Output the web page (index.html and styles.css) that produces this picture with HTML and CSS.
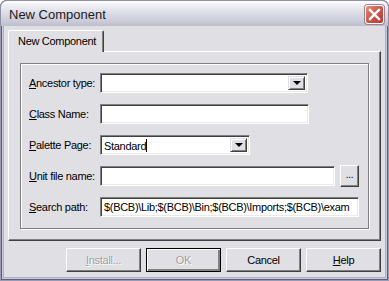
FILE: index.html
```html
<!DOCTYPE html>
<html lang="en">
<head>
    <meta charset="UTF-8">
    <title>New Component</title>
    <link rel="stylesheet" href="styles.css">
</head>
<body>
    <div class="window">
        <!-- Title bar -->
        <div class="titlebar">
            <span class="title">New Component</span>
            <span class="close">
                <svg width="13" height="13" viewBox="0 0 13 13">
                    <path d="M2 2 L11 11 M11 2 L2 11" stroke="#fff" stroke-width="2.4" stroke-linecap="square"/>
                </svg>
            </span>
        </div>

        <div class="client">
            <div class="tabs">
                <div class="tab active">New Component</div>
            </div>

            <div class="page">
                <div class="group">
                    <div class="row">
                        <span class="label"><u>A</u>ncestor type:</span>
                        <div class="field combo w-ancestor">
                            <span class="value"></span>
                            <span class="drop"></span>
                        </div>
                    </div>
                    <div class="row">
                        <span class="label"><u>C</u>lass Name:</span>
                        <div class="field w-class"><span class="value"></span></div>
                    </div>
                    <div class="row">
                        <span class="label"><u>P</u>alette Page:</span>
                        <div class="field combo w-palette">
                            <span class="value">Standard<span class="caret"></span></span>
                            <span class="drop"></span>
                        </div>
                    </div>
                    <div class="row">
                        <span class="label"><u>U</u>nit file name:</span>
                        <div class="field w-unit"><span class="value"></span></div>
                        <div class="btn browse">...</div>
                    </div>
                    <div class="row">
                        <span class="label"><u>S</u>earch path:</span>
                        <div class="field w-search"><span class="value">$(BCB)\Lib;$(BCB)\Bin;$(BCB)\Imports;$(BCB)\exam</span></div>
                    </div>
                </div>
            </div>

            <div class="buttons">
                <div class="btn disabled"><span><u>I</u>nstall...</span></div>
                <div class="btn default disabled"><span>OK</span></div>
                <div class="btn">Cancel</div>
                <div class="btn"><u>H</u>elp</div>
            </div>
        </div>
    </div>
</body>
</html>
```

FILE: styles.css
```css
* {
    box-sizing: border-box;
}

body {
    margin: 0;
    background: #ffffff;
    font-family: "Liberation Sans", Arial, sans-serif;
    font-size: 11px;
    letter-spacing: -0.3px;
    color: #000;
}

/* Window frame */
.window {
    width: 389px;
    height: 281px;
    display: flex;
    flex-direction: column;
    padding: 0 4px 4px;
    background: #e0dfe3;
    border-radius: 7px 7px 0 0;
    box-shadow: inset 0 0 0 1px #9a9ab2, inset 0 0 0 2px #5e5e86, inset 0 0 0 3px #c9c9d8, inset 0 0 0 4px #b0b0c4;
}

.titlebar {
    height: 26px;
    margin: 0 -4px;
    padding: 0 4px 0 8px;
    display: flex;
    align-items: center;
    justify-content: space-between;
    border-radius: 7px 7px 0 0;
    border: 1px solid #8f8fa8;
    border-bottom: none;
    background: linear-gradient(to bottom, #ffffff 0%, #f1f1f6 15%, #dedee8 45%, #cfcfdc 75%, #bdbdcd 100%);
}

.title {
    font-size: 13px;
    letter-spacing: 0;
    color: #1a1a1a;
    padding-top: 1px;
}

.close {
    width: 19px;
    height: 19px;
    display: flex;
    align-items: center;
    justify-content: center;
    border-radius: 3px;
    border: 1px solid #ffffff;
    background: linear-gradient(135deg, #e7907a 0%, #c9554a 50%, #b23c34 100%);
    box-shadow: 0 0 0 1px #a0808a;
    margin-top: 1px;
}

.client {
    flex: 1;
    display: flex;
    flex-direction: column;
    background: #e0dfe3;
}

/* Tab strip */
.tabs {
    display: flex;
    padding: 4px 0 0 4px;
}

.tab {
    height: 22px;
    width: 96px;
    padding: 4px 0 0 9px;
    margin-bottom: -1px;
    white-space: nowrap;
    background: #e0dfe3;
    border-top: 1px solid #ffffff;
    border-left: 1px solid #ffffff;
    border-right: 1px solid #404040;
    box-shadow: inset -1px 0 #808080;
    border-radius: 2px 2px 0 0;
    position: relative;
    z-index: 1;
}

/* Tab page */
.page {
    margin: 0 4px;
    height: 190px;
    padding: 11px;
    border-top: 1px solid #ffffff;
    border-left: 1px solid #ffffff;
    border-right: 1px solid #404040;
    border-bottom: 1px solid #404040;
    box-shadow: inset -1px -1px #808080;
}

/* Etched group box */
.group {
    height: 166px;
    width: 349px;
    border: 1px solid #808080;
    box-shadow: 1px 1px #ffffff, inset 1px 1px #ffffff;
    padding: 9px 0 0 8px;
    display: flex;
    flex-direction: column;
    gap: 11px;
}

.row {
    display: flex;
    align-items: center;
    height: 20px;
}

.label {
    width: 71px;
    flex: none;
    white-space: nowrap;
}

/* Sunken edit fields */
.field {
    height: 20px;
    display: flex;
    background: #ffffff;
    border-top: 1px solid #808080;
    border-left: 1px solid #808080;
    border-right: 1px solid #ffffff;
    border-bottom: 1px solid #ffffff;
    box-shadow: inset 1px 1px #404040, inset -1px -1px #eceae4;
}

.field .value {
    flex: 1;
    padding: 3px 0 0 3px;
    white-space: nowrap;
    overflow: hidden;
}

.caret {
    display: inline-block;
    width: 1px;
    height: 13px;
    background: #000;
    vertical-align: -2px;
}

.w-ancestor { width: 208px; }
.w-class { width: 209px; }
.w-palette { width: 150px; }
.w-unit { width: 235px; }
.w-search { width: 259px; }

/* Drop-down button inside combo */
.drop {
    width: 17px;
    margin: 2px 2px 2px 0;
    background: #e0dfe3;
    border-top: 1px solid #e0dfe3;
    border-left: 1px solid #e0dfe3;
    border-right: 1px solid #404040;
    border-bottom: 1px solid #404040;
    box-shadow: inset 1px 1px #ffffff, inset -1px -1px #808080;
    display: flex;
    align-items: center;
    justify-content: center;
}

.drop::after {
    content: '';
    border-left: 4px solid transparent;
    border-right: 4px solid transparent;
    border-top: 4px solid #000;
    margin-left: 1px;
}

/* Raised buttons */
.btn {
    width: 75px;
    height: 24px;
    display: flex;
    align-items: center;
    justify-content: center;
    background: #e0dfe3;
    border-top: 1px solid #ffffff;
    border-left: 1px solid #ffffff;
    border-right: 1px solid #404040;
    border-bottom: 1px solid #404040;
    box-shadow: inset -1px -1px #808080;
}

.btn.default {
    border: 1px solid #000;
    box-shadow: inset 1px 1px #ffffff, inset -2px -2px #808080, inset -1px -1px #404040;
}

.btn.disabled span {
    color: #a0a0a0;
    text-shadow: 1px 1px #ffffff;
}

.browse {
    width: 19px;
    height: 22px;
    margin-left: 5px;
    padding-bottom: 4px;
    font-size: 10px;
}

.buttons {
    display: flex;
    justify-content: flex-end;
    gap: 5px;
    padding: 7px 4px 0 0;
}
```
